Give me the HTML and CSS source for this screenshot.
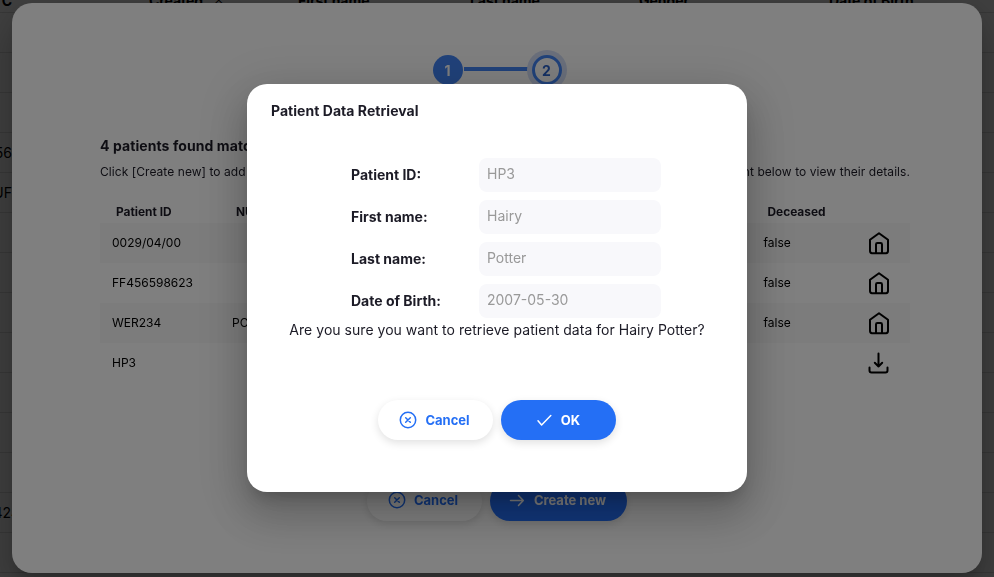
FILE: index.html
```html
<!DOCTYPE html>
<html lang="en">
<head>
<meta charset="utf-8">
<title>Patients</title>
<link rel="stylesheet" href="styles.css">
</head>
<body>
<svg class="defs" aria-hidden="true">
  <symbol id="home" viewBox="0 0 24 24"><path d="M5 22.2A2.2 2.2 0 0 1 3 20V8.800L12 2.200l9 6.600V20a2.200 2.200 0 0 1-2 2.200zM9 22v-8.600q0-1.400 1.400-1.400h3.200q1.400 0 1.400 1.400V22"/></symbol>
  <symbol id="download" viewBox="0 0 24 24"><path d="M11.500 2.500v13M7.800 11.800l3.700 3.700 3.700-3.700M2.500 16.500v3a2 2 0 0 0 2 2h14a2 2 0 0 0 2-2v-3"/></symbol>
  <symbol id="cancel" viewBox="0 0 18 18"><circle cx="9" cy="9" r="7.700"/><path d="m6.700 6.700 4.600 4.600m0-4.600-4.600 4.600"/></symbol>
  <symbol id="check" viewBox="0 0 18 18"><path d="m3 9.800 3.600 4.200L15.800 4.500"/></symbol>
  <symbol id="arrow" viewBox="0 0 18 18"><path d="M2.500 9.500h12.500M10.500 4.500l4.800 5-4.800 5"/></symbol>
</svg>
<main class="page">
  <div class="page-row page-head"><span class="edge">C</span><span>Created <i class="sort">◇</i></span><span>First name</span><span>Last name</span><span>Gender</span><span>Date of Birth</span></div>
  <div class="page-row"></div><div class="page-row"></div><div class="page-row"></div>
  <div class="page-row"><span class="edge">56</span></div>
  <div class="page-row"><span class="edge">UF</span></div>
  <div class="page-row"></div><div class="page-row"></div><div class="page-row"></div><div class="page-row"></div>
  <div class="page-row"></div><div class="page-row"></div><div class="page-row"></div>
  <div class="page-row"><span class="edge code">424</span></div>
  <div class="page-row"></div>
</main>
<div class="mask">
  <section class="dialog search">
    <div class="steps"><span class="step done">1</span><span class="line"></span><span class="step current">2</span></div>
    <h2>4 patients found matching your search</h2>
    <p class="hint"><span>Click [Create new] to add a new patient</span><span>or click on a patient below to view their details.</span></p>
    <div class="table">
      <div class="row head"><span>Patient ID</span><span>NUIC</span><span>Deceased</span><span></span></div>
      <div class="row"><span>0029/04/00</span><span></span><span>false</span><svg class="icon"><use href="#home"/></svg></div>
      <div class="row"><span>FF456598623</span><span></span><span>false</span><svg class="icon"><use href="#home"/></svg></div>
      <div class="row"><span>WER234</span><span>POT</span><span>false</span><svg class="icon"><use href="#home"/></svg></div>
      <div class="row"><span>HP3</span><span></span><span></span><svg class="icon"><use href="#download"/></svg></div>
    </div>
    <div class="actions"><button class="btn"><svg><use href="#cancel"/></svg>Cancel</button><button class="btn primary create"><svg><use href="#arrow"/></svg>Create new</button></div>
  </section>
</div>
<div class="mask">
  <section class="dialog confirm">
    <h1>Patient Data Retrieval</h1>
    <div class="fields">
      <span>Patient ID:</span><div class="value">HP3</div>
      <span>First name:</span><div class="value">Hairy</div>
      <span>Last name:</span><div class="value">Potter</div>
      <span>Date of Birth:</span><div class="value">2007-05-30</div>
    </div>
    <p class="question">Are you sure you want to retrieve patient data for Hairy Potter?</p>
    <div class="actions"><button class="btn"><svg><use href="#cancel"/></svg>Cancel</button><button class="btn primary"><svg><use href="#check"/></svg>OK</button></div>
  </section>
</div>
</body>
</html>
```
FILE: styles.css
```css
* { box-sizing: border-box; }
body { margin: 0; height: 577px; overflow: hidden; background: #fff; font-family: Inter, sans-serif; font-size: 14px; color: #1c1b26; }
h1, h2, p { margin: 0; }
.defs { position: absolute; width: 0; height: 0; }
.page { height: 577px; overflow: hidden; color: #000; }
.page-row { height: 40px; display: flex; align-items: center; border-bottom: 1px solid #ddd; padding-bottom: 1px; }
.page-head { margin-top: -27px; display: grid; grid-template-columns: 149px 149px 172px 169px 190px 1fr; font-weight: 700; letter-spacing: -.05px; padding-top: 16px; }
.edge { display: flex; justify-content: flex-end; width: 12px; white-space: nowrap; }
.code { width: 20px; }
.sort { font-style: normal; font-size: 8px; margin-left: 8px; }
.mask { position: fixed; inset: 0; background: rgba(0, 0, 0, .5); display: flex; align-items: center; justify-content: center; }
.dialog { background: #fff; border-radius: 20px; box-shadow: 0 11px 15px -7px rgba(0,0,0,.2), 0 24px 38px 3px rgba(0,0,0,.14), 0 9px 46px 8px rgba(0,0,0,.12); }
.search { width: 970px; height: 570px; margin-top: -1px; padding: 47px 72px 0 88px; }
.steps { display: flex; justify-content: center; align-items: center; height: 40px; margin-right: 16px; }
.step { width: 30px; height: 30px; border-radius: 50%; display: flex; align-items: center; justify-content: center; font-size: 14px; font-weight: 700; }
.done { background: #4285f4; color: #fff; }
.line { width: 68px; height: 4px; background: #4285f4; margin: 0 0 2px 1px; }
.current { border: 3px solid #4285f4; color: #2a62c9; box-shadow: 0 0 0 5px #d5dff7; background: #fff; }
h2 { margin-top: 46px; font-size: 14px; line-height: 20px; font-weight: 700; letter-spacing: .08px; }
.hint { display: flex; justify-content: space-between; font-size: 12px; line-height: 18px; margin-top: 7px; letter-spacing: .06px; }
.table { margin-top: 22px; font-size: 12px; color: #000; }
.row { height: 40px; display: grid; grid-template-columns: 120px 531.500px 103px 1fr; align-items: center; padding-left: 12px; }
.row span { padding-bottom: 2px; }
.row:nth-child(even) { background: #f8f8f8; }
.head { height: 20px; font-weight: 700; font-size: 11.900px; padding: 0 0 2px 16px; color: #1c1b26; }
.icon { width: 24px; height: 24px; fill: none; stroke: #000; stroke-width: 2; stroke-linecap: round; stroke-linejoin: round; }
.actions { display: flex; justify-content: center; gap: 8px; }
.search .actions { margin-top: 98px; margin-right: 17px; }
.btn { width: 115px; height: 40px; border: 0; border-radius: 20px; background: #fff; color: #246ff5; font: 700 13px Inter, sans-serif; letter-spacing: 0; padding: 0 2px 0 0; display: flex; align-items: center; justify-content: center; gap: 8px; box-shadow: 0 3px 8px rgba(0,0,0,.12); }
.btn svg { width: 18px; height: 18px; fill: none; stroke: currentColor; stroke-width: 1.500; stroke-linecap: round; stroke-linejoin: round; }
.primary { background: #246ff5; color: #fff; }
.create { width: 137px; }
.search .btn { padding-bottom: 2px; }
.confirm { width: 500px; height: 408px; margin-top: -1px; padding: 17px 24px; }
h1 { font-size: 14px; line-height: 20px; font-weight: 700; letter-spacing: .04px; }
.fields { display: grid; grid-template-columns: 128px 182px; grid-auto-rows: 34px; row-gap: 8px; align-items: center; margin: 37px 0 0 80px; font-weight: 700; letter-spacing: 0; }
.fields span { padding-bottom: 2px; }
.value { height: 34px; background: #f8f8fb; border-radius: 8px; padding: 0 8px; line-height: 32px; color: #999; font-weight: 400; letter-spacing: 0; }
.question { text-align: center; line-height: 20px; margin-top: 2px; letter-spacing: .03px; }
.confirm .actions { margin-top: 60px; }
```
